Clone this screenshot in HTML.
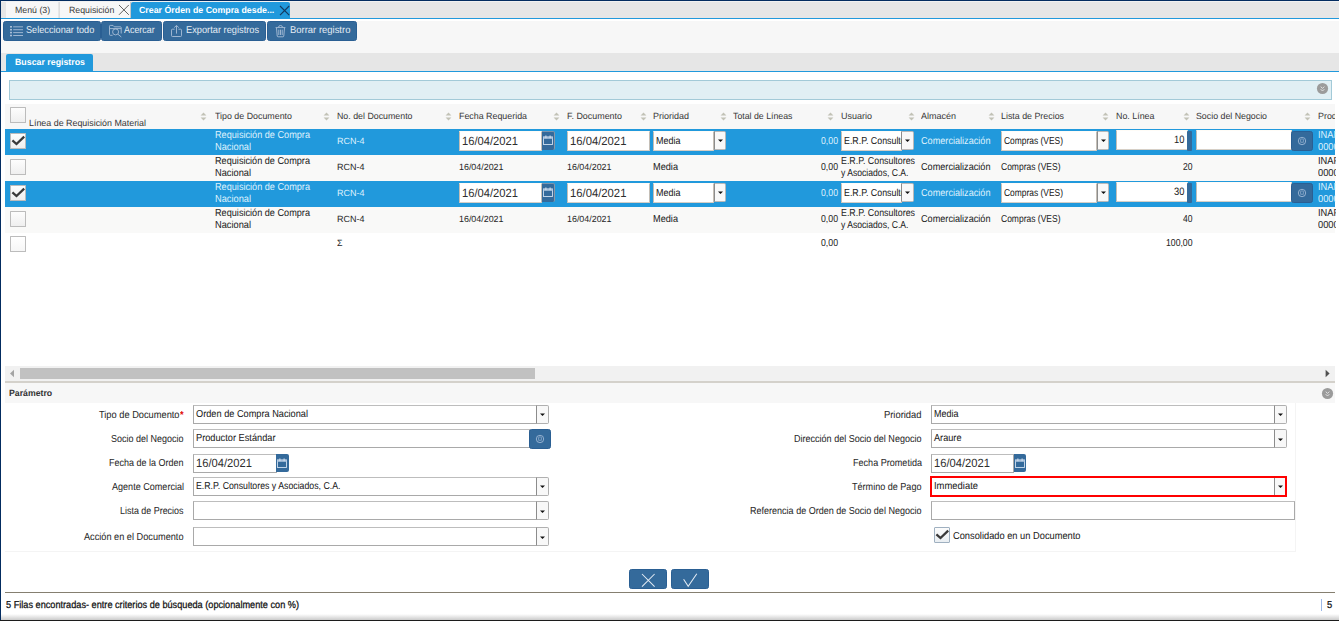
<!DOCTYPE html>
<html lang="es">
<head>
<meta charset="utf-8">
<title>Crear Órden de Compra desde Requisición</title>
<style>
*{box-sizing:border-box;margin:0;padding:0}
html,body{width:1339px;height:621px;overflow:hidden;background:#fff}
body{position:relative;font-family:"Liberation Sans",sans-serif}
.a{position:absolute;display:block}
.x{position:absolute;white-space:pre;font-family:"Liberation Sans",sans-serif;font-size:12px;line-height:14px;height:14px;transform-origin:0 0;text-rendering:geometricPrecision}
.xi{font-size:16px;line-height:18px;height:18px}
.xn{font-size:14px;line-height:16px;height:16px}
</style>
</head>
<body>
<div class="a" style="left:1px;top:1px;width:1338px;height:17px;background:#e6e6e6"></div>
<div class="a" style="left:1px;top:1px;width:1338px;height:1px;background:#f1f1f1"></div>
<div class="a" style="left:6px;top:2px;width:52.4px;height:16px;background:#f7f7f7"></div>
<div class="a" style="left:60px;top:2px;width:71px;height:16px;background:#f7f7f7"></div>
<div class="a" style="left:131px;top:2px;width:159px;height:17px;background:#2199dc;border-radius:2px 2px 0 0"></div>
<div class="a" style="left:1px;top:18px;width:1338px;height:1px;background:#2199dc"></div>
<div class="a" style="left:130px;top:2px;width:1px;height:16px;background:#c8c8c8"></div>
<div class="a" style="left:59px;top:2px;width:1px;height:16px;background:#dedede"></div>
<svg class="a" style="left:118.1px;top:4.2px" width="11.8" height="11.8" viewBox="-5.9 -5.9 11.8 11.8"><path d="M-4.9 -4.9L4.9 4.9M4.9 -4.9L-4.9 4.9" stroke="#5a5a5a" stroke-width="0.95" fill="none"/></svg>
<svg class="a" style="left:278.9px;top:4.5px" width="11.2" height="11.2" viewBox="-5.6 -5.6 11.2 11.2"><path d="M-4.6 -4.6L4.6 4.6M4.6 -4.6L-4.6 4.6" stroke="#143a60" stroke-width="1.15" fill="none"/></svg>
<div class="a" style="left:1px;top:19px;width:1338px;height:34px;background:#f7f7f7"></div>
<div class="a" style="left:1px;top:19px;width:1338px;height:2px;background:#fff"></div>
<div class="a" style="left:3px;top:21px;width:97.5px;height:20px;background:#346a9b;border:1px solid #2a5f93;border-radius:2.5px"></div>
<div class="a" style="left:100.5px;top:21px;width:61.5px;height:20px;background:#346a9b;border:1px solid #2a5f93;border-radius:2.5px"></div>
<div class="a" style="left:163px;top:21px;width:103px;height:20px;background:#346a9b;border:1px solid #2a5f93;border-radius:2.5px"></div>
<div class="a" style="left:267px;top:21px;width:90px;height:20px;background:#346a9b;border:1px solid #2a5f93;border-radius:2.5px"></div>
<div class="a" style="left:1px;top:53px;width:1338px;height:18px;background:#e6e6e6"></div>
<div class="a" style="left:1px;top:71px;width:1338px;height:1px;background:#2199dc"></div>
<div class="a" style="left:6px;top:54px;width:87px;height:18px;background:#2199dc;border-radius:2px 2px 0 0"></div>
<div class="a" style="left:9px;top:80px;width:1323px;height:20px;background:#e1eff4;border:1px solid #a3cad8"></div>
<div class="a" style="left:5px;top:104px;width:1330px;height:25px;background:#f7f7f7"></div>
<div class="a" style="left:5px;top:129px;width:1330px;height:26px;background:#2199dc"></div>
<div class="a" style="left:5px;top:155px;width:1330px;height:26px;background:#f9f9f8"></div>
<div class="a" style="left:5px;top:181px;width:1330px;height:26px;background:#2199dc"></div>
<div class="a" style="left:5px;top:207px;width:1330px;height:26px;background:#f9f9f8"></div>
<div class="a" style="left:10px;top:107px;width:16px;height:16px;border:1px solid #bcbcbc;background:linear-gradient(#fdfdfd,#efefef);border-radius:0.5px"></div>
<div class="a" style="left:10px;top:133px;width:16px;height:16px;border:1px solid #bcbcbc;background:linear-gradient(#fdfdfd,#efefef);border-radius:0.5px"><svg width="16" height="16" viewBox="0 0 16 16" style="position:absolute;left:-1px;top:-1px"><path d="M2.4 7.4L6.5 11L14.2 3.6" stroke="#3a3a3a" stroke-width="2.3" fill="none"/></svg></div>
<div class="a" style="left:10px;top:159px;width:16px;height:16px;border:1px solid #bcbcbc;background:linear-gradient(#fdfdfd,#efefef);border-radius:0.5px"></div>
<div class="a" style="left:10px;top:185px;width:16px;height:16px;border:1px solid #bcbcbc;background:linear-gradient(#fdfdfd,#efefef);border-radius:0.5px"><svg width="16" height="16" viewBox="0 0 16 16" style="position:absolute;left:-1px;top:-1px"><path d="M2.4 7.4L6.5 11L14.2 3.6" stroke="#3a3a3a" stroke-width="2.3" fill="none"/></svg></div>
<div class="a" style="left:10px;top:211px;width:16px;height:16px;border:1px solid #bcbcbc;background:linear-gradient(#fdfdfd,#efefef);border-radius:0.5px"></div>
<div class="a" style="left:10px;top:236px;width:16px;height:16px;border:1px solid #bcbcbc;background:linear-gradient(#fff,#f6f6f6);border-radius:0.5px"></div>
<svg class="a" style="left:200px;top:111.5px" width="7" height="9" viewBox="0 0 7 9"><path d="M3.5 0.4L6.4 3.6H0.6Z M3.5 8.6L6.4 5.4H0.6Z" fill="#c2c2b6"/></svg>
<svg class="a" style="left:323px;top:111.5px" width="7" height="9" viewBox="0 0 7 9"><path d="M3.5 0.4L6.4 3.6H0.6Z M3.5 8.6L6.4 5.4H0.6Z" fill="#c2c2b6"/></svg>
<svg class="a" style="left:445px;top:111.5px" width="7" height="9" viewBox="0 0 7 9"><path d="M3.5 0.4L6.4 3.6H0.6Z M3.5 8.6L6.4 5.4H0.6Z" fill="#c2c2b6"/></svg>
<svg class="a" style="left:553px;top:111.5px" width="7" height="9" viewBox="0 0 7 9"><path d="M3.5 0.4L6.4 3.6H0.6Z M3.5 8.6L6.4 5.4H0.6Z" fill="#c2c2b6"/></svg>
<svg class="a" style="left:640px;top:111.5px" width="7" height="9" viewBox="0 0 7 9"><path d="M3.5 0.4L6.4 3.6H0.6Z M3.5 8.6L6.4 5.4H0.6Z" fill="#c2c2b6"/></svg>
<svg class="a" style="left:720px;top:111.5px" width="7" height="9" viewBox="0 0 7 9"><path d="M3.5 0.4L6.4 3.6H0.6Z M3.5 8.6L6.4 5.4H0.6Z" fill="#c2c2b6"/></svg>
<svg class="a" style="left:827px;top:111.5px" width="7" height="9" viewBox="0 0 7 9"><path d="M3.5 0.4L6.4 3.6H0.6Z M3.5 8.6L6.4 5.4H0.6Z" fill="#c2c2b6"/></svg>
<svg class="a" style="left:908px;top:111.5px" width="7" height="9" viewBox="0 0 7 9"><path d="M3.5 0.4L6.4 3.6H0.6Z M3.5 8.6L6.4 5.4H0.6Z" fill="#c2c2b6"/></svg>
<svg class="a" style="left:988px;top:111.5px" width="7" height="9" viewBox="0 0 7 9"><path d="M3.5 0.4L6.4 3.6H0.6Z M3.5 8.6L6.4 5.4H0.6Z" fill="#c2c2b6"/></svg>
<svg class="a" style="left:1102px;top:111.5px" width="7" height="9" viewBox="0 0 7 9"><path d="M3.5 0.4L6.4 3.6H0.6Z M3.5 8.6L6.4 5.4H0.6Z" fill="#c2c2b6"/></svg>
<svg class="a" style="left:1183px;top:111.5px" width="7" height="9" viewBox="0 0 7 9"><path d="M3.5 0.4L6.4 3.6H0.6Z M3.5 8.6L6.4 5.4H0.6Z" fill="#c2c2b6"/></svg>
<svg class="a" style="left:1304px;top:111.5px" width="7" height="9" viewBox="0 0 7 9"><path d="M3.5 0.4L6.4 3.6H0.6Z M3.5 8.6L6.4 5.4H0.6Z" fill="#c2c2b6"/></svg>
<div class="a" style="left:459px;top:131px;width:83px;height:20px;background:#fff;border:1px solid #c4beb6;border-top-color:rgba(255,250,240,0.55);border-bottom-color:#d6cfc6"></div>
<div class="a" style="left:541.6px;top:131px;width:13.2px;height:19px;background:#346a9b;border-radius:0 2px 2px 0;border-top:1px solid #7f94ab;border-right:1px solid #8b97a6"><svg width="12" height="12" viewBox="0 0 12 12" style="position:absolute;left:0.3px;top:1.5px"><rect x="1.5" y="2.9" width="9" height="7.6" fill="none" stroke="#cfdff0" stroke-width="0.9"/><rect x="1.5" y="2.9" width="9" height="1.9" fill="#a9c1dc"/><path d="M3.9 1.4V4.2M8.1 1.4V4.2" stroke="#dbe7f4" stroke-width="0.9"/></svg></div>
<div class="a" style="left:567px;top:131px;width:82.5px;height:20px;background:#fff;border:1px solid #c4beb6;border-top-color:rgba(255,250,240,0.55);border-bottom-color:#d6cfc6"></div>
<div class="a" style="left:653px;top:131px;width:61px;height:20px;background:#fff;border:1px solid #c4beb6;border-top-color:rgba(255,250,240,0.55);border-bottom-color:#d6cfc6"></div>
<div class="a" style="left:713.5px;top:131px;width:12.5px;height:18.5px;background:#f8f8f8;border:1px solid #b9b9b9;border-left-color:#8c8c8c;border-radius:0 2px 2px 0"><svg width="7" height="4" viewBox="0 0 7 4" style="position:absolute;left:2.3px;top:7.2px"><path d="M1 0.5H6L3.5 3.1Z" fill="#111"/></svg></div>
<div class="a" style="left:841px;top:131px;width:60.5px;height:20px;background:#fff;border:1px solid #c4beb6;border-top-color:rgba(255,250,240,0.55);border-bottom-color:#d6cfc6"></div>
<div class="a" style="left:901px;top:131px;width:12.5px;height:18.5px;background:#f8f8f8;border:1px solid #b9b9b9;border-left-color:#8c8c8c;border-radius:0 2px 2px 0"><svg width="7" height="4" viewBox="0 0 7 4" style="position:absolute;left:2.3px;top:7.2px"><path d="M1 0.5H6L3.5 3.1Z" fill="#111"/></svg></div>
<div class="a" style="left:1001px;top:131px;width:96px;height:20px;background:#fff;border:1px solid #c4beb6;border-top-color:rgba(255,250,240,0.55);border-bottom-color:#d6cfc6"></div>
<div class="a" style="left:1096.5px;top:131px;width:12.5px;height:18.5px;background:#f8f8f8;border:1px solid #b9b9b9;border-left-color:#8c8c8c;border-radius:0 2px 2px 0"><svg width="7" height="4" viewBox="0 0 7 4" style="position:absolute;left:2.3px;top:7.2px"><path d="M1 0.5H6L3.5 3.1Z" fill="#111"/></svg></div>
<div class="a" style="left:1116px;top:130px;width:71.5px;height:20px;background:#fff;border:1px solid #c4beb6;border-top-color:rgba(255,250,240,0.55);border-bottom-color:#d6cfc6"></div>
<div class="a" style="left:1187px;top:131px;width:5px;height:20px;background:#346a9b;border-radius:1px"></div>
<div class="a" style="left:1196px;top:130px;width:95.5px;height:20px;background:#fff;border:1px solid #c4beb6;border-top-color:rgba(255,250,240,0.55);border-bottom-color:#d6cfc6"></div>
<div class="a" style="left:1291px;top:131px;width:22px;height:20px;background:#346a9b;border:1px solid #2a5f93;border-radius:2.5px"><svg width="10" height="10" viewBox="0 0 10 10" style="position:absolute;left:4.9px;top:3.5px"><circle cx="5" cy="5" r="3.7" fill="none" stroke="#a9c0da" stroke-width="0.8"/><rect x="3.6" y="3" width="2.8" height="3.2" rx="0.6" fill="none" stroke="#9db6d2" stroke-width="0.7"/><path d="M3 7.4L4 6.4M7 7.4L6 6.4" stroke="#9db6d2" stroke-width="0.7"/></svg></div>
<div class="a" style="left:459px;top:183px;width:83px;height:20px;background:#fff;border:1px solid #c4beb6;border-top-color:rgba(255,250,240,0.55);border-bottom-color:#d6cfc6"></div>
<div class="a" style="left:541.6px;top:183px;width:13.2px;height:19px;background:#346a9b;border-radius:0 2px 2px 0;border-top:1px solid #7f94ab;border-right:1px solid #8b97a6"><svg width="12" height="12" viewBox="0 0 12 12" style="position:absolute;left:0.3px;top:1.5px"><rect x="1.5" y="2.9" width="9" height="7.6" fill="none" stroke="#cfdff0" stroke-width="0.9"/><rect x="1.5" y="2.9" width="9" height="1.9" fill="#a9c1dc"/><path d="M3.9 1.4V4.2M8.1 1.4V4.2" stroke="#dbe7f4" stroke-width="0.9"/></svg></div>
<div class="a" style="left:567px;top:183px;width:82.5px;height:20px;background:#fff;border:1px solid #c4beb6;border-top-color:rgba(255,250,240,0.55);border-bottom-color:#d6cfc6"></div>
<div class="a" style="left:653px;top:183px;width:61px;height:20px;background:#fff;border:1px solid #c4beb6;border-top-color:rgba(255,250,240,0.55);border-bottom-color:#d6cfc6"></div>
<div class="a" style="left:713.5px;top:183px;width:12.5px;height:18.5px;background:#f8f8f8;border:1px solid #b9b9b9;border-left-color:#8c8c8c;border-radius:0 2px 2px 0"><svg width="7" height="4" viewBox="0 0 7 4" style="position:absolute;left:2.3px;top:7.2px"><path d="M1 0.5H6L3.5 3.1Z" fill="#111"/></svg></div>
<div class="a" style="left:841px;top:183px;width:60.5px;height:20px;background:#fff;border:1px solid #c4beb6;border-top-color:rgba(255,250,240,0.55);border-bottom-color:#d6cfc6"></div>
<div class="a" style="left:901px;top:183px;width:12.5px;height:18.5px;background:#f8f8f8;border:1px solid #b9b9b9;border-left-color:#8c8c8c;border-radius:0 2px 2px 0"><svg width="7" height="4" viewBox="0 0 7 4" style="position:absolute;left:2.3px;top:7.2px"><path d="M1 0.5H6L3.5 3.1Z" fill="#111"/></svg></div>
<div class="a" style="left:1001px;top:183px;width:96px;height:20px;background:#fff;border:1px solid #c4beb6;border-top-color:rgba(255,250,240,0.55);border-bottom-color:#d6cfc6"></div>
<div class="a" style="left:1096.5px;top:183px;width:12.5px;height:18.5px;background:#f8f8f8;border:1px solid #b9b9b9;border-left-color:#8c8c8c;border-radius:0 2px 2px 0"><svg width="7" height="4" viewBox="0 0 7 4" style="position:absolute;left:2.3px;top:7.2px"><path d="M1 0.5H6L3.5 3.1Z" fill="#111"/></svg></div>
<div class="a" style="left:1116px;top:182px;width:71.5px;height:20px;background:#fff;border:1px solid #c4beb6;border-top-color:rgba(255,250,240,0.55);border-bottom-color:#d6cfc6"></div>
<div class="a" style="left:1187px;top:183px;width:5px;height:20px;background:#346a9b;border-radius:1px"></div>
<div class="a" style="left:1196px;top:182px;width:95.5px;height:20px;background:#fff;border:1px solid #c4beb6;border-top-color:rgba(255,250,240,0.55);border-bottom-color:#d6cfc6"></div>
<div class="a" style="left:1291px;top:183px;width:22px;height:20px;background:#346a9b;border:1px solid #2a5f93;border-radius:2.5px"><svg width="10" height="10" viewBox="0 0 10 10" style="position:absolute;left:4.9px;top:3.5px"><circle cx="5" cy="5" r="3.7" fill="none" stroke="#a9c0da" stroke-width="0.8"/><rect x="3.6" y="3" width="2.8" height="3.2" rx="0.6" fill="none" stroke="#9db6d2" stroke-width="0.7"/><path d="M3 7.4L4 6.4M7 7.4L6 6.4" stroke="#9db6d2" stroke-width="0.7"/></svg></div>
<svg class="a" style="left:1315.9px;top:82.1px" width="13" height="13" viewBox="0 0 13 13"><circle cx="6.5" cy="6.5" r="5.6" fill="#9b9b9b"/><path d="M4.7 4.6L6.5 6.4L8.3 4.6M4.7 7.2L6.5 9L8.3 7.2" stroke="#e4e4e4" stroke-width="1" fill="none"/></svg>
<div class="a" style="left:5px;top:366px;width:1330px;height:15px;background:#f1f1f1"></div>
<div class="a" style="left:20px;top:368px;width:515px;height:11px;background:#c1c1c1"></div>
<svg class="a" style="left:9px;top:369px" width="6" height="9" viewBox="0 0 6 9"><path d="M5 0.8V8.2L1 4.5Z" fill="#a3a3a3"/></svg>
<svg class="a" style="left:1324px;top:369px" width="6" height="9" viewBox="0 0 6 9"><path d="M1.6 0.8V8.2L5.6 4.5Z" fill="#505050"/></svg>
<div class="a" style="left:5px;top:381px;width:1330px;height:2px;background:#d4d1cb"></div>
<div class="a" style="left:5px;top:383px;width:1330px;height:20px;background:#f7f7f7"></div>
<svg class="a" style="left:1320.5px;top:386.5px" width="13" height="13" viewBox="0 0 13 13"><circle cx="6.5" cy="6.5" r="5.6" fill="#9b9b9b"/><path d="M4.7 4.6L6.5 6.4L8.3 4.6M4.7 7.2L6.5 9L8.3 7.2" stroke="#e4e4e4" stroke-width="1" fill="none"/></svg>
<div class="a" style="left:5px;top:551px;width:1291px;height:1px;background:#f4f4f4"></div>
<div class="a" style="left:1295px;top:403px;width:1px;height:149px;background:#f4f4f4"></div>
<div class="a" style="left:193px;top:405px;width:343.5px;height:18.6px;background:#fff;border:1px solid #a9a9a9;border-top-color:#bdbdbd"></div>
<div class="a" style="left:536px;top:405px;width:12.5px;height:18.6px;background:#f8f8f8;border:1px solid #b0b0b0;border-left-color:#8c8c8c;border-radius:0 2px 2px 0"><svg width="7" height="4" viewBox="0 0 7 4" style="position:absolute;left:2.3px;top:7.2px"><path d="M1 0.5H6L3.5 3.1Z" fill="#111"/></svg></div>
<div class="a" style="left:193px;top:429.4px;width:336.5px;height:18.4px;background:#fff;border:1px solid #a9a9a9;border-top-color:#bdbdbd"></div>
<div class="a" style="left:529px;top:429px;width:22px;height:20px;background:#346a9b;border:1px solid #2a5f93;border-radius:2.5px"><svg width="10" height="10" viewBox="0 0 10 10" style="position:absolute;left:4.9px;top:3.5px"><circle cx="5" cy="5" r="3.7" fill="none" stroke="#a9c0da" stroke-width="0.8"/><rect x="3.6" y="3" width="2.8" height="3.2" rx="0.6" fill="none" stroke="#9db6d2" stroke-width="0.7"/><path d="M3 7.4L4 6.4M7 7.4L6 6.4" stroke="#9db6d2" stroke-width="0.7"/></svg></div>
<div class="a" style="left:193px;top:454.2px;width:83.5px;height:18.6px;background:#fff;border:1px solid #a9a9a9;border-top-color:#bdbdbd"></div>
<div class="a" style="left:276px;top:454.2px;width:12.5px;height:18.2px;background:#346a9b;border-radius:0 2px 2px 0"><svg width="12" height="12" viewBox="0 0 12 12" style="position:absolute;left:0.3px;top:2.6px"><rect x="1.5" y="2.9" width="9" height="7.6" fill="none" stroke="#cfdff0" stroke-width="0.9"/><rect x="1.5" y="2.9" width="9" height="1.9" fill="#a9c1dc"/><path d="M3.9 1.4V4.2M8.1 1.4V4.2" stroke="#dbe7f4" stroke-width="0.9"/></svg></div>
<div class="a" style="left:193px;top:477px;width:343.5px;height:18.6px;background:#fff;border:1px solid #a9a9a9;border-top-color:#bdbdbd"></div>
<div class="a" style="left:536px;top:477px;width:12.5px;height:18.6px;background:#f8f8f8;border:1px solid #b0b0b0;border-left-color:#8c8c8c;border-radius:0 2px 2px 0"><svg width="7" height="4" viewBox="0 0 7 4" style="position:absolute;left:2.3px;top:7.2px"><path d="M1 0.5H6L3.5 3.1Z" fill="#111"/></svg></div>
<div class="a" style="left:193px;top:501.4px;width:343.5px;height:18.6px;background:#fff;border:1px solid #a9a9a9;border-top-color:#bdbdbd"></div>
<div class="a" style="left:536px;top:501.4px;width:12.5px;height:18.6px;background:#f8f8f8;border:1px solid #b0b0b0;border-left-color:#8c8c8c;border-radius:0 2px 2px 0"><svg width="7" height="4" viewBox="0 0 7 4" style="position:absolute;left:2.3px;top:7.2px"><path d="M1 0.5H6L3.5 3.1Z" fill="#111"/></svg></div>
<div class="a" style="left:193px;top:527.4px;width:343.5px;height:18.6px;background:#fff;border:1px solid #a9a9a9;border-top-color:#bdbdbd"></div>
<div class="a" style="left:536px;top:527.4px;width:12.5px;height:18.6px;background:#f8f8f8;border:1px solid #b0b0b0;border-left-color:#8c8c8c;border-radius:0 2px 2px 0"><svg width="7" height="4" viewBox="0 0 7 4" style="position:absolute;left:2.3px;top:7.2px"><path d="M1 0.5H6L3.5 3.1Z" fill="#111"/></svg></div>
<div class="a" style="left:931px;top:405px;width:343.5px;height:18.6px;background:#fff;border:1px solid #a9a9a9;border-top-color:#bdbdbd"></div>
<div class="a" style="left:1274px;top:405px;width:12.5px;height:18.6px;background:#f8f8f8;border:1px solid #b0b0b0;border-left-color:#8c8c8c;border-radius:0 2px 2px 0"><svg width="7" height="4" viewBox="0 0 7 4" style="position:absolute;left:2.3px;top:7.2px"><path d="M1 0.5H6L3.5 3.1Z" fill="#111"/></svg></div>
<div class="a" style="left:931px;top:429.4px;width:343.5px;height:18.6px;background:#fff;border:1px solid #a9a9a9;border-top-color:#bdbdbd"></div>
<div class="a" style="left:1274px;top:429.4px;width:12.5px;height:18.6px;background:#f8f8f8;border:1px solid #b0b0b0;border-left-color:#8c8c8c;border-radius:0 2px 2px 0"><svg width="7" height="4" viewBox="0 0 7 4" style="position:absolute;left:2.3px;top:7.2px"><path d="M1 0.5H6L3.5 3.1Z" fill="#111"/></svg></div>
<div class="a" style="left:931px;top:454.2px;width:83px;height:18.6px;background:#fff;border:1px solid #a9a9a9;border-top-color:#bdbdbd"></div>
<div class="a" style="left:1013.5px;top:454.2px;width:12.5px;height:18.2px;background:#346a9b;border-radius:0 2px 2px 0"><svg width="12" height="12" viewBox="0 0 12 12" style="position:absolute;left:0.3px;top:2.6px"><rect x="1.5" y="2.9" width="9" height="7.6" fill="none" stroke="#cfdff0" stroke-width="0.9"/><rect x="1.5" y="2.9" width="9" height="1.9" fill="#a9c1dc"/><path d="M3.9 1.4V4.2M8.1 1.4V4.2" stroke="#dbe7f4" stroke-width="0.9"/></svg></div>
<div class="a" style="left:931px;top:477px;width:343.5px;height:18.6px;background:#fff;border:1px solid #a9a9a9;border-top-color:#bdbdbd"></div>
<div class="a" style="left:1274px;top:477px;width:12.5px;height:18.6px;background:#f8f8f8;border:1px solid #b0b0b0;border-left-color:#8c8c8c;border-radius:0 2px 2px 0"><svg width="7" height="4" viewBox="0 0 7 4" style="position:absolute;left:2.3px;top:7.2px"><path d="M1 0.5H6L3.5 3.1Z" fill="#111"/></svg></div>
<div class="a" style="left:930px;top:476px;width:357px;height:20.6px;border:2px solid #f00"></div>
<div class="a" style="left:931px;top:501.2px;width:363.6px;height:18.6px;background:#fff;border:1px solid #a9a9a9;border-top-color:#bdbdbd"></div>
<div class="a" style="left:934px;top:527px;width:16px;height:16px;border:1px solid #9fb0c0;background:linear-gradient(#fcfcfc,#e9eef2);border-radius:1px"><svg width="16" height="16" viewBox="0 0 16 16" style="position:absolute;left:-1px;top:-1px"><path d="M2.4 7.4L6.5 11L14.2 3.6" stroke="#3a3a3a" stroke-width="2.3" fill="none"/></svg></div>
<div class="a" style="left:629px;top:569px;width:38px;height:20px;background:#346a9b;border:1px solid #2a5f93;border-radius:2.5px"><svg width="16" height="16" viewBox="0 0 16 16" style="position:absolute;left:10.4px;top:1.5px"><path d="M2 2L14.6 14.6M14.6 2L2 14.6" stroke="#e3ebf4" stroke-width="1.05" fill="none"/></svg></div>
<div class="a" style="left:671px;top:569px;width:38px;height:20px;background:#346a9b;border:1px solid #2a5f93;border-radius:2.5px"><svg width="18" height="16" viewBox="0 0 18 16" style="position:absolute;left:10.4px;top:1.5px"><path d="M1.6 7.2L6.2 14.4L14.8 1.8" stroke="#e3ebf4" stroke-width="1.05" fill="none"/></svg></div>
<div class="a" style="left:5px;top:592px;width:1330px;height:1px;background:#857f70"></div>
<div class="a" style="left:1321px;top:599px;width:1px;height:12px;background:#9db8e8"></div>
<div class="a" style="left:0px;top:614px;width:1339px;height:6px;background:linear-gradient(#fff,#cbcbcb)"></div>
<div class="a" style="left:0px;top:620px;width:1339px;height:1px;background:#1c1c1c"></div>
<div class="a" style="left:0px;top:0px;width:1339px;height:1px;background:#032c60"></div>
<div class="a" style="left:0px;top:0px;width:1px;height:620px;background:#032c60"></div>

<svg class="a" style="left:9px;top:25px" width="15" height="12" viewBox="0 0 15 12"><g fill="#a9bed7"><rect x="1" y="1" width="2" height="1.6"/><rect x="1" y="3.9" width="2" height="1.6"/><rect x="1" y="6.8" width="2" height="1.6"/><rect x="1" y="9.7" width="2" height="1.6"/><rect x="4.2" y="1.4" width="9.8" height="0.9"/><rect x="4.2" y="4.3" width="9.8" height="0.9"/><rect x="4.2" y="7.2" width="9.8" height="0.9"/><rect x="4.2" y="10.1" width="9.8" height="0.9"/></g></svg>
<svg class="a" style="left:108px;top:24px" width="15" height="14" viewBox="0 0 15 14"><g fill="none" stroke="#a9bed7" stroke-width="0.9"><path d="M1.5 10.5V2.2Q1.5 1.4 2.3 1.4H5L6.3 2.8H12.4Q13.2 2.8 13.2 3.6V9.5"/><path d="M1.5 4.6H13.2"/><path d="M1.5 10.5Q1.5 11.3 2.3 11.3H4.6"/><circle cx="7.6" cy="7.9" r="3"/><path d="M9.9 10.2L13.3 13"/></g></svg>
<svg class="a" style="left:170px;top:24px" width="13" height="14" viewBox="0 0 13 14"><g fill="none" stroke="#a9bed7" stroke-width="0.9"><path d="M4.6 5.2H2.4Q1.5 5.2 1.5 6.1V11.6Q1.5 12.5 2.4 12.5H10.6Q11.5 12.5 11.5 11.6V6.1Q11.5 5.2 10.6 5.2H8.4"/><path d="M6.5 9.6V1.8M4.2 3.6L6.5 1.5L8.8 3.6"/></g></svg>
<svg class="a" style="left:274px;top:24px" width="13" height="14" viewBox="0 0 13 14"><g fill="none" stroke="#a9bed7" stroke-width="0.9"><path d="M1.6 3.6H11.4M4.4 3.4Q4.6 1.5 6.5 1.5Q8.4 1.5 8.6 3.4M2.5 3.8L3.2 12Q3.3 12.8 4.1 12.8H8.9Q9.7 12.8 9.8 12L10.5 3.8M4.8 5.6V11M6.5 5.6V11M8.2 5.6V11"/></g></svg>

<div class="x" style="left:14.80px;top:4.80px;transform:scale(0.7329,0.745);color:#3a3a3a">Menú (3)</div>
<div class="x" style="left:68.50px;top:4.80px;transform:scale(0.7301,0.745);color:#3a3a3a">Requisición</div>
<div class="x" style="left:139.20px;top:4.80px;transform:scale(0.7351,0.745);color:#fff;font-weight:bold">Crear Órden de Compra desde...</div>
<div class="x" style="left:25.50px;top:23.87px;transform:scale(0.7641,0.83);color:#e4ecf4">Seleccionar todo</div>
<div class="x" style="left:124.40px;top:23.87px;transform:scale(0.7426,0.83);color:#e4ecf4">Acercar</div>
<div class="x" style="left:186.30px;top:23.87px;transform:scale(0.7719,0.83);color:#e4ecf4">Exportar registros</div>
<div class="x" style="left:290.10px;top:23.87px;transform:scale(0.7876,0.83);color:#e4ecf4">Borrar registro</div>
<div class="x" style="left:14.70px;top:56.80px;transform:scale(0.7339,0.745);color:#fff;font-weight:bold">Buscar registros</div>
<div class="x" style="left:28.50px;top:117.81px;transform:scale(0.7401,0.745);color:#363636">Línea de Requisición Material</div>
<div class="x" style="left:214.50px;top:110.81px;transform:scale(0.7384,0.745);color:#363636">Tipo de Documento</div>
<div class="x" style="left:336.50px;top:110.81px;transform:scale(0.7349,0.745);color:#363636">No. del Documento</div>
<div class="x" style="left:458.50px;top:110.81px;transform:scale(0.7386,0.745);color:#363636">Fecha Requerida</div>
<div class="x" style="left:566.50px;top:110.81px;transform:scale(0.7428,0.745);color:#363636">F. Documento</div>
<div class="x" style="left:652.50px;top:110.81px;transform:scale(0.7495,0.745);color:#363636">Prioridad</div>
<div class="x" style="left:733.00px;top:110.81px;transform:scale(0.7309,0.745);color:#363636">Total de Líneas</div>
<div class="x" style="left:840.50px;top:110.81px;transform:scale(0.7495,0.745);color:#363636">Usuario</div>
<div class="x" style="left:920.50px;top:110.81px;transform:scale(0.7497,0.745);color:#363636">Almacén</div>
<div class="x" style="left:1000.50px;top:110.81px;transform:scale(0.7378,0.745);color:#363636">Lista de Precios</div>
<div class="x" style="left:1115.50px;top:110.81px;transform:scale(0.7397,0.745);color:#363636">No. Línea</div>
<div class="x" style="left:1195.50px;top:110.81px;transform:scale(0.7340,0.745);color:#363636">Socio del Negocio</div>
<div class="x" style="left:1318.30px;top:110.81px;transform:scale(0.7400,0.745);color:#363636;width:23.0px;overflow:hidden">Prod</div>
<div class="x" style="left:215.00px;top:128.76px;transform:scale(0.7616,0.84);color:#dff1fc">Requisición de Compra</div>
<div class="x" style="left:215.00px;top:140.76px;transform:scale(0.7708,0.84);color:#dff1fc">Nacional</div>
<div class="x" style="left:336.50px;top:135.81px;transform:scale(0.7499,0.745);color:#dff1fc">RCN-4</div>
<div class="x" style="left:1318.00px;top:128.76px;transform:scale(0.7750,0.84);color:#dff1fc;width:23.2px;overflow:hidden">INAF</div>
<div class="x" style="left:1318.00px;top:140.76px;transform:scale(0.7750,0.84);color:#dff1fc;width:23.2px;overflow:hidden">0000</div>
<div class="x" style="left:821.00px;top:134.76px;transform:scale(0.7278,0.84);color:#dff1fc">0,00</div>
<div class="x" style="left:921.00px;top:134.76px;transform:scale(0.7606,0.84);color:#dff1fc">Comercialización</div>
<div class="x xi" style="left:461.85px;top:134.64px;transform:scale(0.6981,0.74);color:#2e2e2e">16/04/2021</div>
<div class="x xi" style="left:569.85px;top:134.64px;transform:scale(0.7043,0.74);color:#2e2e2e">16/04/2021</div>
<div class="x" style="left:656.00px;top:134.76px;transform:scale(0.7495,0.84);color:#222;-webkit-text-stroke:0.06px #222">Media</div>
<div class="x" style="left:844.00px;top:134.76px;transform:scale(0.7363,0.84);color:#222;-webkit-text-stroke:0.06px #222;width:78.1px;overflow:hidden">E.R.P. Consultores</div>
<div class="x" style="left:1004.00px;top:134.76px;transform:scale(0.7021,0.84);color:#222;-webkit-text-stroke:0.06px #222">Compras (VES)</div>
<div class="x xn" style="left:1174.30px;top:133.12px;transform:scale(0.6676,0.76);color:#222">10</div>
<div class="x" style="left:215.00px;top:154.76px;transform:scale(0.7616,0.84);color:#262626;-webkit-text-stroke:0.06px #262626">Requisición de Compra</div>
<div class="x" style="left:215.00px;top:166.76px;transform:scale(0.7708,0.84);color:#262626;-webkit-text-stroke:0.06px #262626">Nacional</div>
<div class="x" style="left:336.50px;top:161.81px;transform:scale(0.7499,0.745);color:#262626">RCN-4</div>
<div class="x" style="left:1318.00px;top:154.76px;transform:scale(0.7750,0.84);color:#262626;-webkit-text-stroke:0.06px #262626;width:23.2px;overflow:hidden">INAF</div>
<div class="x" style="left:1318.00px;top:166.76px;transform:scale(0.7750,0.84);color:#262626;-webkit-text-stroke:0.06px #262626;width:23.2px;overflow:hidden">0000</div>
<div class="x" style="left:821.00px;top:160.76px;transform:scale(0.7278,0.84);color:#262626;-webkit-text-stroke:0.06px #262626">0,00</div>
<div class="x" style="left:921.00px;top:160.76px;transform:scale(0.7606,0.84);color:#262626;-webkit-text-stroke:0.06px #262626">Comercialización</div>
<div class="x" style="left:458.50px;top:161.81px;transform:scale(0.7409,0.745);color:#262626">16/04/2021</div>
<div class="x" style="left:566.50px;top:161.81px;transform:scale(0.7409,0.745);color:#262626">16/04/2021</div>
<div class="x" style="left:653.00px;top:160.76px;transform:scale(0.7648,0.84);color:#262626;-webkit-text-stroke:0.06px #262626">Media</div>
<div class="x" style="left:841.00px;top:154.76px;transform:scale(0.7363,0.84);color:#262626;-webkit-text-stroke:0.06px #262626">E.R.P. Consultores</div>
<div class="x" style="left:841.00px;top:166.76px;transform:scale(0.7177,0.84);color:#262626;-webkit-text-stroke:0.06px #262626">y Asociados, C.A.</div>
<div class="x" style="left:1001.00px;top:160.76px;transform:scale(0.7081,0.84);color:#262626;-webkit-text-stroke:0.06px #262626">Compras (VES)</div>
<div class="x" style="left:1183.00px;top:160.76px;transform:scale(0.7111,0.84);color:#262626;-webkit-text-stroke:0.06px #262626">20</div>
<div class="x" style="left:215.00px;top:180.76px;transform:scale(0.7616,0.84);color:#dff1fc">Requisición de Compra</div>
<div class="x" style="left:215.00px;top:192.76px;transform:scale(0.7708,0.84);color:#dff1fc">Nacional</div>
<div class="x" style="left:336.50px;top:187.81px;transform:scale(0.7499,0.745);color:#dff1fc">RCN-4</div>
<div class="x" style="left:1318.00px;top:180.76px;transform:scale(0.7750,0.84);color:#dff1fc;width:23.2px;overflow:hidden">INAF</div>
<div class="x" style="left:1318.00px;top:192.76px;transform:scale(0.7750,0.84);color:#dff1fc;width:23.2px;overflow:hidden">0000</div>
<div class="x" style="left:821.00px;top:186.76px;transform:scale(0.7278,0.84);color:#dff1fc">0,00</div>
<div class="x" style="left:921.00px;top:186.76px;transform:scale(0.7606,0.84);color:#dff1fc">Comercialización</div>
<div class="x xi" style="left:461.85px;top:186.64px;transform:scale(0.6981,0.74);color:#2e2e2e">16/04/2021</div>
<div class="x xi" style="left:569.85px;top:186.64px;transform:scale(0.7043,0.74);color:#2e2e2e">16/04/2021</div>
<div class="x" style="left:656.00px;top:186.76px;transform:scale(0.7495,0.84);color:#222;-webkit-text-stroke:0.06px #222">Media</div>
<div class="x" style="left:844.00px;top:186.76px;transform:scale(0.7363,0.84);color:#222;-webkit-text-stroke:0.06px #222;width:78.1px;overflow:hidden">E.R.P. Consultores</div>
<div class="x" style="left:1004.00px;top:186.76px;transform:scale(0.7021,0.84);color:#222;-webkit-text-stroke:0.06px #222">Compras (VES)</div>
<div class="x xn" style="left:1174.30px;top:185.12px;transform:scale(0.6676,0.76);color:#222">30</div>
<div class="x" style="left:215.00px;top:206.76px;transform:scale(0.7616,0.84);color:#262626;-webkit-text-stroke:0.06px #262626">Requisición de Compra</div>
<div class="x" style="left:215.00px;top:218.76px;transform:scale(0.7708,0.84);color:#262626;-webkit-text-stroke:0.06px #262626">Nacional</div>
<div class="x" style="left:336.50px;top:213.81px;transform:scale(0.7499,0.745);color:#262626">RCN-4</div>
<div class="x" style="left:1318.00px;top:206.76px;transform:scale(0.7750,0.84);color:#262626;-webkit-text-stroke:0.06px #262626;width:23.2px;overflow:hidden">INAF</div>
<div class="x" style="left:1318.00px;top:218.76px;transform:scale(0.7750,0.84);color:#262626;-webkit-text-stroke:0.06px #262626;width:23.2px;overflow:hidden">0000</div>
<div class="x" style="left:821.00px;top:212.76px;transform:scale(0.7278,0.84);color:#262626;-webkit-text-stroke:0.06px #262626">0,00</div>
<div class="x" style="left:921.00px;top:212.76px;transform:scale(0.7606,0.84);color:#262626;-webkit-text-stroke:0.06px #262626">Comercialización</div>
<div class="x" style="left:458.50px;top:213.81px;transform:scale(0.7409,0.745);color:#262626">16/04/2021</div>
<div class="x" style="left:566.50px;top:213.81px;transform:scale(0.7409,0.745);color:#262626">16/04/2021</div>
<div class="x" style="left:653.00px;top:212.76px;transform:scale(0.7648,0.84);color:#262626;-webkit-text-stroke:0.06px #262626">Media</div>
<div class="x" style="left:841.00px;top:206.76px;transform:scale(0.7363,0.84);color:#262626;-webkit-text-stroke:0.06px #262626">E.R.P. Consultores</div>
<div class="x" style="left:841.00px;top:218.76px;transform:scale(0.7177,0.84);color:#262626;-webkit-text-stroke:0.06px #262626">y Asociados, C.A.</div>
<div class="x" style="left:1001.00px;top:212.76px;transform:scale(0.7081,0.84);color:#262626;-webkit-text-stroke:0.06px #262626">Compras (VES)</div>
<div class="x" style="left:1183.00px;top:212.76px;transform:scale(0.7111,0.84);color:#262626;-webkit-text-stroke:0.06px #262626">40</div>
<div class="x" style="left:336.50px;top:237.81px;transform:scale(0.7400,0.745);color:#262626">Σ</div>
<div class="x" style="left:821.00px;top:236.76px;transform:scale(0.7278,0.84);color:#262626;-webkit-text-stroke:0.06px #262626">0,00</div>
<div class="x" style="left:1166.00px;top:236.76px;transform:scale(0.7220,0.84);color:#262626;-webkit-text-stroke:0.06px #262626">100,00</div>
<div class="x" style="left:8.90px;top:387.81px;transform:scale(0.7276,0.745);color:#333;font-weight:bold">Parámetro</div>
<div class="x" style="left:98.50px;top:408.76px;transform:scale(0.7720,0.84);color:#2a2a2a;-webkit-text-stroke:0.06px #2a2a2a">Tipo de Documento</div>
<div class="x" style="left:111.00px;top:432.76px;transform:scale(0.7495,0.84);color:#2a2a2a;-webkit-text-stroke:0.06px #2a2a2a">Socio del Negocio</div>
<div class="x" style="left:109.00px;top:456.76px;transform:scale(0.7494,0.84);color:#2a2a2a;-webkit-text-stroke:0.06px #2a2a2a">Fecha de la Orden</div>
<div class="x" style="left:111.50px;top:480.76px;transform:scale(0.7548,0.84);color:#2a2a2a;-webkit-text-stroke:0.06px #2a2a2a">Agente Comercial</div>
<div class="x" style="left:120.00px;top:504.76px;transform:scale(0.7436,0.84);color:#2a2a2a;-webkit-text-stroke:0.06px #2a2a2a">Lista de Precios</div>
<div class="x" style="left:84.00px;top:530.76px;transform:scale(0.7649,0.84);color:#2a2a2a;-webkit-text-stroke:0.06px #2a2a2a">Acción en el Documento</div>
<div class="x" style="left:179.50px;top:408.76px;transform:scale(0.7750,0.84);color:#e00000;font-weight:bold">*</div>
<div class="x" style="left:884.00px;top:408.76px;transform:scale(0.7807,0.84);color:#2a2a2a;-webkit-text-stroke:0.06px #2a2a2a">Prioridad</div>
<div class="x" style="left:794.00px;top:432.76px;transform:scale(0.7525,0.84);color:#2a2a2a;-webkit-text-stroke:0.06px #2a2a2a">Dirección del Socio del Negocio</div>
<div class="x" style="left:852.50px;top:456.76px;transform:scale(0.7550,0.84);color:#2a2a2a;-webkit-text-stroke:0.06px #2a2a2a">Fecha Prometida</div>
<div class="x" style="left:852.00px;top:480.76px;transform:scale(0.7549,0.84);color:#2a2a2a;-webkit-text-stroke:0.06px #2a2a2a">Término de Pago</div>
<div class="x" style="left:750.00px;top:504.76px;transform:scale(0.7517,0.84);color:#2a2a2a;-webkit-text-stroke:0.06px #2a2a2a">Referencia de Orden de Socio del Negocio</div>
<div class="x" style="left:196.00px;top:407.76px;transform:scale(0.7667,0.84);color:#222;-webkit-text-stroke:0.06px #222">Orden de Compra Nacional</div>
<div class="x" style="left:196.00px;top:431.76px;transform:scale(0.7689,0.84);color:#222;-webkit-text-stroke:0.06px #222">Productor Estándar</div>
<div class="x xi" style="left:195.85px;top:456.64px;transform:scale(0.6981,0.74);color:#2e2e2e">16/04/2021</div>
<div class="x" style="left:196.00px;top:479.76px;transform:scale(0.7303,0.84);color:#222;-webkit-text-stroke:0.06px #222">E.R.P. Consultores y Asociados, C.A.</div>
<div class="x" style="left:934.00px;top:407.76px;transform:scale(0.7495,0.84);color:#222;-webkit-text-stroke:0.06px #222">Media</div>
<div class="x" style="left:934.00px;top:431.76px;transform:scale(0.7632,0.84);color:#222;-webkit-text-stroke:0.06px #222">Araure</div>
<div class="x xi" style="left:933.85px;top:456.64px;transform:scale(0.6981,0.74);color:#2e2e2e">16/04/2021</div>
<div class="x" style="left:934.00px;top:479.76px;transform:scale(0.7853,0.84);color:#222;-webkit-text-stroke:0.06px #222">Immediate</div>
<div class="x" style="left:953.00px;top:529.76px;transform:scale(0.7738,0.84);color:#222;-webkit-text-stroke:0.06px #222">Consolidado en un Documento</div>
<div class="x" style="left:6.00px;top:598.76px;transform:scale(0.7639,0.84);color:#111;-webkit-text-stroke:0.3px #111">5 Filas encontradas- entre criterios de búsqueda (opcionalmente con %)</div>
<div class="x" style="left:1326.50px;top:598.76px;transform:scale(0.7750,0.84);color:#111;-webkit-text-stroke:0.3px #111">5</div>
</body>
</html>
